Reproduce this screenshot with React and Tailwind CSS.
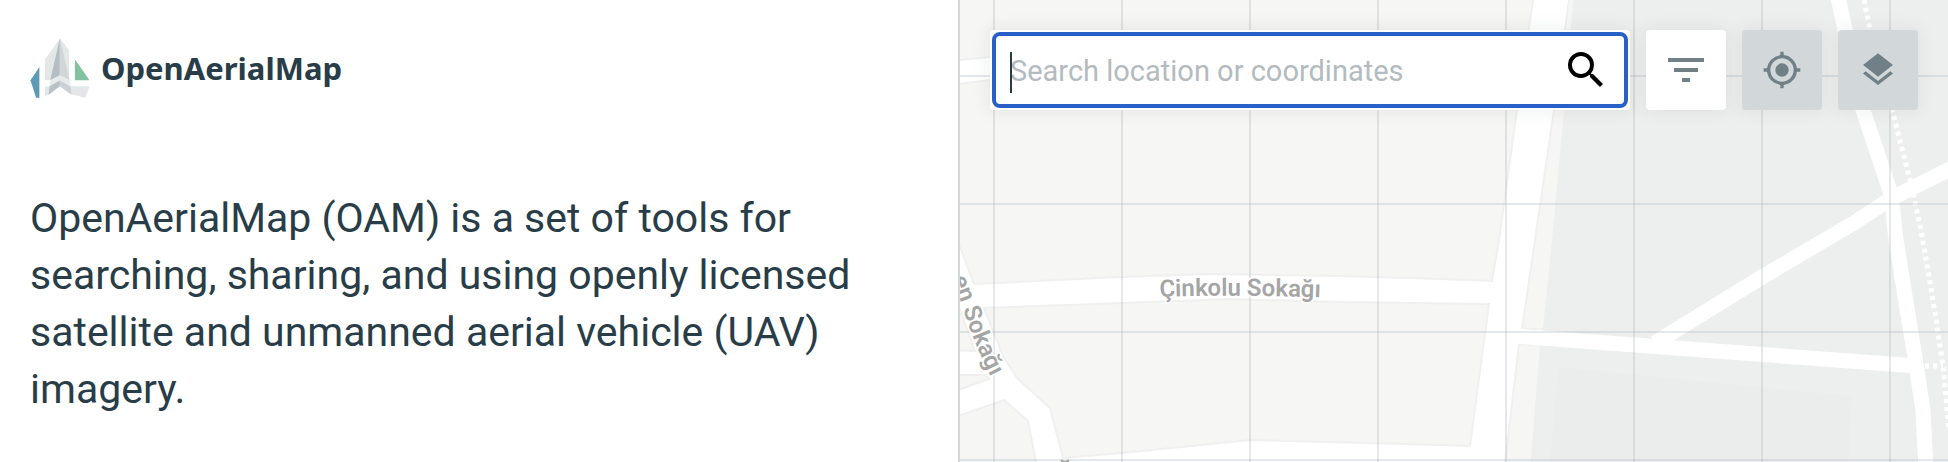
import { MdFilterList, MdLayers, MdMyLocation, MdSearch } from "react-icons/md";

const blocks = [
  "950,-10 1534,-10 1533,0 1526,48 990,57 950,61",
  "950,85 990,80 1521,80 1517,110 1499,240 1492,281 1440,279 1340,276 1210,274 1122,277 974,284 950,220",
  "984,308 1122,303 1230,299 1340,302 1489,304 1470,446 1440,445 1250,440 1122,453 1063,458 1050,408 1018,379 1004,358",
  "950,284 960,310 975,351 950,350",
  "950,375 986,375 989,379 950,393",
  "950,419 1004,400 1028,421 1038,472 950,472",
  "1570,-10 1700,-10 1700,329 1522,329 1535,240 1554,110 1569,0",
  "1519,344 1700,350 1700,472 1504,472",
];

const columns = [994, 1122, 1250, 1378, 1506, 1634, 1762, 1890];
const rows = [76, 204, 332, 460];

function Logo() {
  return (
    <svg viewBox="91 112 181 182" className="h-[60px] w-[60px]" aria-hidden="true">
      <path fill="#5c9ab5" d="M119 200 92 240 109 293H119Z" />
      <path fill="#82c2a0" d="M226 176 271 240H226Z" />
      <path fill="#e3e7e8" d="M181 113 136 178V240H226V172L181 113Z" />
      <path fill="#fff" d="M209 148 226 172V240H209Z" />
      <path fill="#e3e7e8" d="M136 258H271L258 293 216 283 181 258 148 283 136 290Z" />
      <path fill="#b5bec2" d="M181 113V225L152 240Z" />
      <path fill="#d1d7d9" d="M181 113V225L211 240Z" />
      <path fill="#e8ebec" d="M181 225 211 240 214 258 181 240 149 258 152 240Z" />
      <path fill="#b9c1c5" d="M181 240V258L147 284 150 258Z" />
      <path fill="#cbd1d4" d="M181 240V258L216 284 213 258Z" />
    </svg>
  );
}

function MapCanvas() {
  return (
    <svg
      viewBox="960 0 988 462"
      preserveAspectRatio="xMinYMin slice"
      className="absolute inset-0 h-full w-full"
      aria-label="Street map"
      role="img"
    >
      <rect x="960" width="988" height="462" fill="#fff" />
      <g fill="#f6f6f4" stroke="#eff0ef" strokeWidth="2">
        {blocks.map((points) => (
          <polygon key={points} points={points} />
        ))}
      </g>
      <path fill="#edefee" d="M1574-10 1564 110 1552 240 1543 328 1540 344 1530 472H1960V-10Z" />
      <path fill="#ebedec" d="M1558 367 1852 396 1848 472H1549Z" />
      <g fill="none" stroke="#fff" strokeWidth="15">
        <path d="M1514 336 1917 366" />
        <path d="M1655 343 1762 277 1854 223 1892 198 1960 164" />
        <path d="M1836-10 1839 2 1863 110 1891 194 1896 240 1915 358 1923 410 1926 472" />
      </g>
      <g fill="none" stroke="#fff" strokeWidth="5" strokeDasharray="4 4">
        <path d="M1864 0 1870 30 1892 110 1910 180 1921 230 1933 300 1943 366 1949 430" />
        <path d="M1925 366H1943" />
      </g>
      <g stroke="#a9b4bd" strokeOpacity="0.3" strokeWidth="2">
        {columns.map((x) => (
          <path key={x} d={`M${x} 0V462`} />
        ))}
        {rows.map((y) => (
          <path key={y} d={`M960 ${y}H1948`} />
        ))}
      </g>
      <path id="street-a" fill="none" d="M1160 297Q1235 294 1340 298" />
      <path id="street-b" fill="none" d="M928 215 963 308Q973 342 991 377" />
      <g
        fill="#a5a5a5"
        stroke="#fff"
        strokeWidth="3"
        strokeLinejoin="round"
        paintOrder="stroke"
        fontSize="24"
        fontWeight="600"
        fontFamily="Roboto, 'Liberation Sans', sans-serif"
      >
        <text>
          <textPath href="#street-a">Çinkolu Sokağı</textPath>
        </text>
        <text>
          <textPath href="#street-b" startOffset="100%" textAnchor="end">
            en Sokağı
          </textPath>
        </text>
      </g>
      <path fill="none" stroke="#a5a5a5" strokeWidth="2" d="M1061 460Q1065 464 1069 460" />
    </svg>
  );
}

export default function App() {
  return (
    <div className="flex min-h-screen bg-white font-['Roboto','Liberation_Sans',sans-serif] text-[#283d47]">
      <section className="w-[960px] shrink-0 border-r-2 border-[#d2d8db] px-[30px] pt-[38px]">
        <header className="flex h-[60px] items-center gap-[11px]">
          <Logo />
          <h1 className="font-['Noto_Sans','Open_Sans',sans-serif] text-[31px] leading-[60px] font-bold">
            OpenAerialMap
          </h1>
        </header>
        <p className="mt-[92px] text-[41px] leading-[57px]">
          OpenAerialMap (OAM) is a set of tools for searching, sharing, and using openly licensed
          satellite and unmanned aerial vehicle (UAV) imagery.
        </p>
      </section>

      <main className="relative min-w-0 flex-1 overflow-hidden">
        <MapCanvas />
        <div className="relative flex gap-4 p-[30px]">
          <form
            role="search"
            className="flex h-20 min-w-0 flex-1 rounded-sm bg-white p-0.5 shadow-[0_0_16px_4px_rgba(40,61,71,0.06)]"
          >
            <div className="relative flex min-w-0 flex-1 items-center rounded-lg border-4 border-[#2860c8] pr-[14px] pl-[14px]">
              <span className="absolute top-4 left-[14px] h-[41px] w-0.5 bg-[#283d47]" />
              <input
                type="text"
                aria-label="Search location or coordinates"
                placeholder="Search location or coordinates"
                className="h-full min-w-0 flex-1 pt-0.5 text-[29px] outline-none placeholder:text-[#b3bbbf]"
              />
              <button type="button" aria-label="Search" className="text-black">
                <MdSearch size={48} />
              </button>
            </div>
          </form>
          <button
            type="button"
            aria-label="Filter"
            className="flex size-20 items-center justify-center rounded-sm bg-white text-[#717f87] shadow-[0_0_16px_4px_rgba(40,61,71,0.06)]"
          >
            <MdFilterList size={48} />
          </button>
          <button
            type="button"
            aria-label="My location"
            className="flex size-20 items-center justify-center rounded-sm bg-[#d2d7da] text-[#717f87] shadow-[0_0_16px_4px_rgba(40,61,71,0.06)]"
          >
            <MdMyLocation size={40} />
          </button>
          <button
            type="button"
            aria-label="Layers"
            className="flex size-20 items-center justify-center rounded-sm bg-[#d2d7da] text-[#717f87] shadow-[0_0_16px_4px_rgba(40,61,71,0.06)]"
          >
            <MdLayers size={40} />
          </button>
        </div>
      </main>
    </div>
  );
}
